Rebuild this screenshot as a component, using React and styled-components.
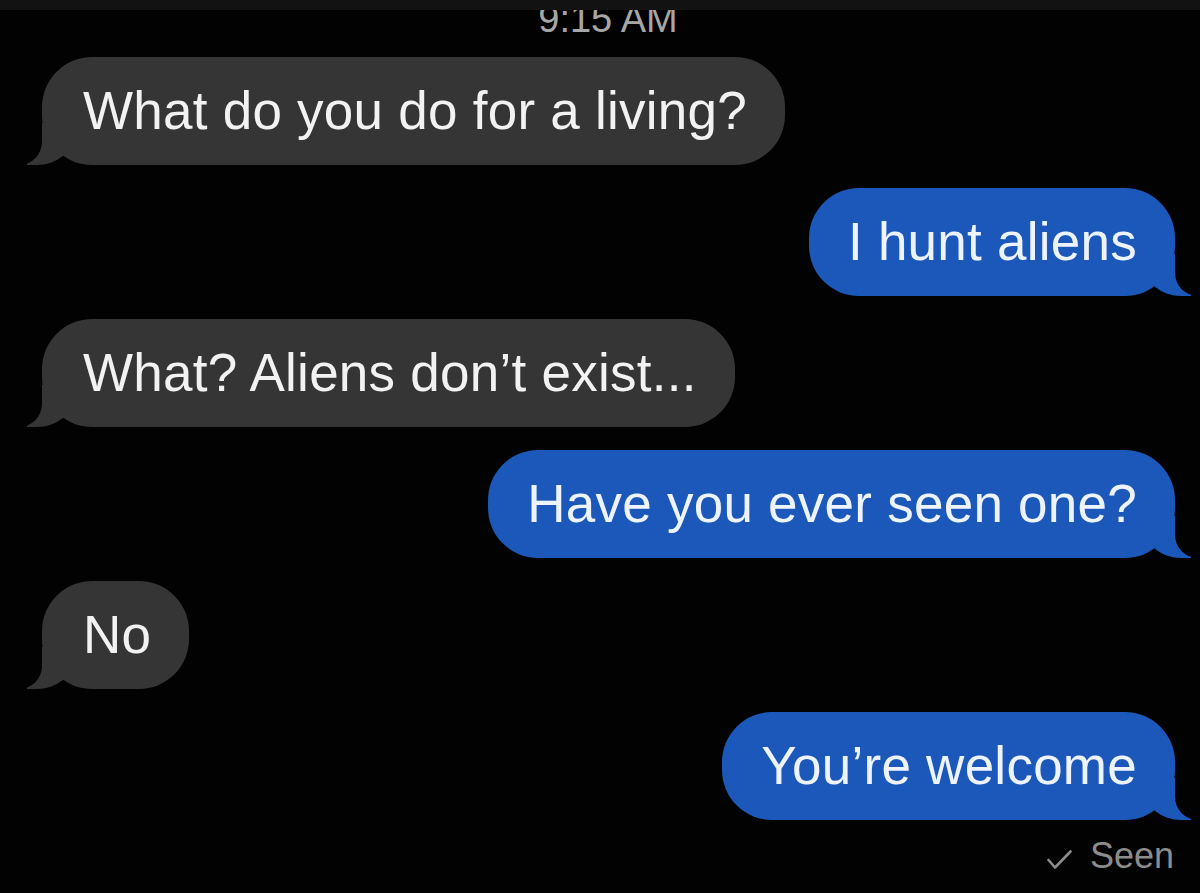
import React from "react"
import styled, { createGlobalStyle } from "styled-components"

const BG = "#020202"
const GREY = "#353536"
const BLUE = "#1b58ba"

const GlobalStyle = createGlobalStyle`
  html, body {
    margin: 0;
    padding: 0;
    background: ${BG};
    overflow: hidden;
  }
  body {
    font-family: "Liberation Sans", Arial, Helvetica, sans-serif;
    -webkit-font-smoothing: antialiased;
  }
`

const Screen = styled.div`
  width: 1200px;
  height: 893px;
  background: ${BG};
  display: flex;
  flex-direction: column;
  overflow: hidden;
`

const TopEdge = styled.div`
  height: 10px;
  flex-shrink: 0;
  background: #121212;
`

const Stamp = styled.div`
  height: 28px;
  flex-shrink: 0;
  overflow: hidden;
  display: flex;
  justify-content: center;
  align-items: flex-end;
  padding-left: 16px;
  span {
    font-size: 38px;
    line-height: 38px;
    color: #a6a6a6;
  }
`

const Thread = styled.div`
  display: flex;
  flex-direction: column;
  gap: 23px;
  padding: 19px 25px 0 42px;
`

const Row = styled.div`
  display: flex;
  justify-content: ${({ $out }) => ($out ? "flex-end" : "flex-start")};
`

const Bubble = styled.div`
  position: relative;
  height: 108px;
  box-sizing: border-box;
  padding: 23px 38px 23px ${({ $out }) => ($out ? "39px" : "41px")};
  border-radius: 50px;
  font-size: 53px;
  letter-spacing: 0.25px;
  line-height: 62px;
  white-space: nowrap;
  background: ${({ $out }) => ($out ? BLUE : GREY)};
  color: ${({ $out }) => ($out ? "#eef4ff" : "#f2f2f2")};

  &::before {
    content: "";
    position: absolute;
    bottom: 0;
    width: 46px;
    height: 42px;
    background: ${({ $out }) => ($out ? BLUE : GREY)};
    ${({ $out }) =>
      $out
        ? "right: -16px; border-bottom-left-radius: 36px 30px;"
        : "left: -15px; border-bottom-right-radius: 36px 30px;"}
  }

  &::after {
    content: "";
    position: absolute;
    bottom: 0;
    width: 58px;
    height: 42px;
    background: ${BG};
    ${({ $out }) =>
      $out
        ? "right: -58px; border-bottom-left-radius: 23px;"
        : "left: -58px; border-bottom-right-radius: 23px;"}
  }
`

const Receipt = styled.div`
  display: flex;
  justify-content: flex-end;
  align-items: center;
  gap: 18px;
  margin-top: -5px;
  padding-right: 1px;
  font-size: 36px;
  line-height: 36px;
  color: #8c8c8c;
  svg {
    margin-top: 6px;
  }
`

const messages = [
  { text: "What do you do for a living?", out: false },
  { text: "I hunt aliens", out: true },
  { text: "What? Aliens don’t exist...", out: false },
  { text: "Have you ever seen one?", out: true },
  { text: "No", out: false },
  { text: "You’re welcome", out: true },
]

const Check = () => (
  <svg width="25" height="19" viewBox="0 0 25 19" fill="none">
    <path
      d="M1.5 10 L8 17.5 L23.5 1.5"
      stroke="#8c8c8c"
      strokeWidth="2.6"
      strokeLinecap="round"
      strokeLinejoin="round"
    />
  </svg>
)

const App = () => (
  <Screen>
    <GlobalStyle />
    <TopEdge />
    <Stamp>
      <span>9:15 AM</span>
    </Stamp>
    <Thread>
      {messages.map((m, i) => (
        <Row key={i} $out={m.out}>
          <Bubble $out={m.out}>{m.text}</Bubble>
        </Row>
      ))}
      <Receipt>
        <Check />
        <span>Seen</span>
      </Receipt>
    </Thread>
  </Screen>
)

export default App
